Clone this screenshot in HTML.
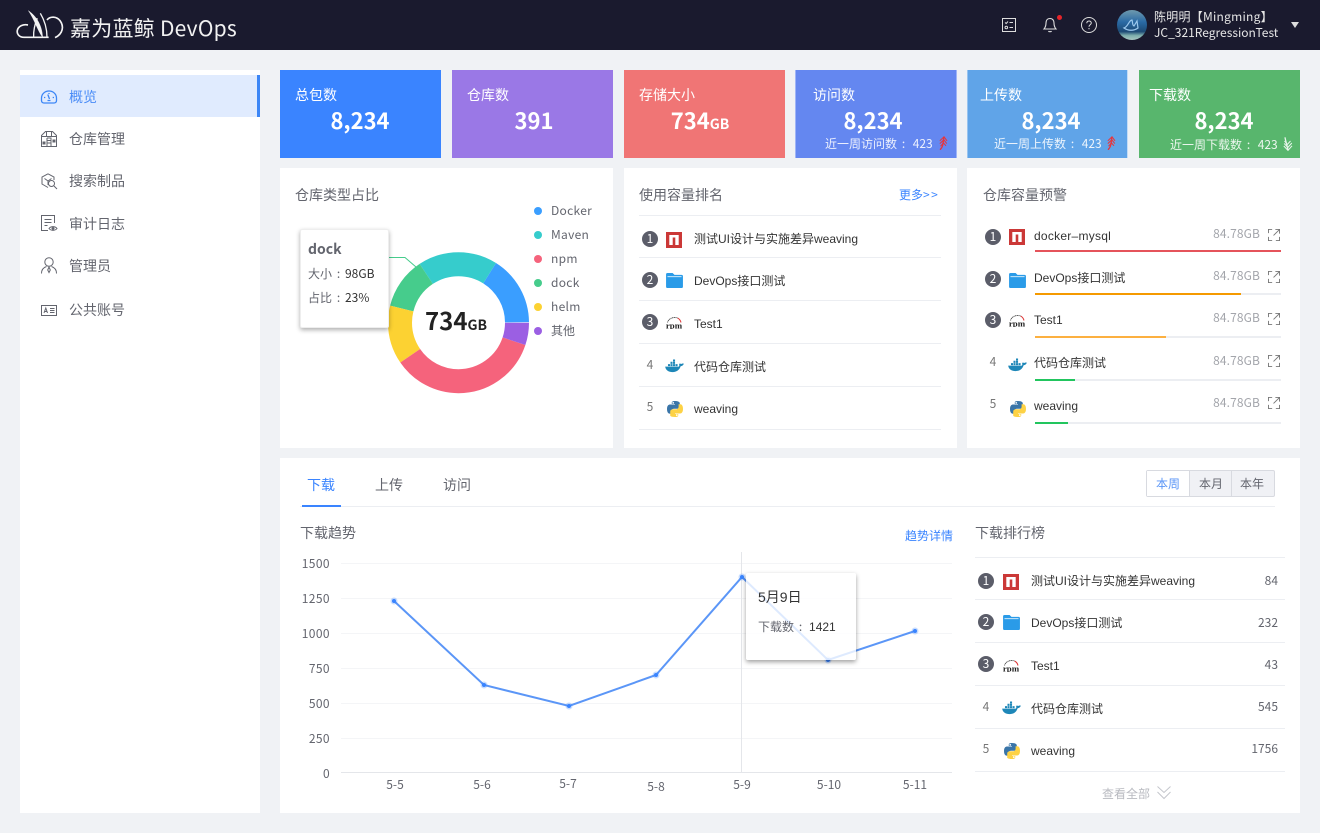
<!DOCTYPE html>
<html lang="zh"><head><meta charset="utf-8"><title>嘉为蓝鲸 DevOps</title>
<style>
*{box-sizing:border-box}
html,body{margin:0;padding:0}
body{width:1320px;height:833px;position:relative;overflow:hidden;background:#f0f2f5;font-family:"Noto Sans CJK SC","Liberation Sans",sans-serif;color:#63656e}
.a,.t{position:absolute}
.t{white-space:nowrap;line-height:20px;height:20px}
.w{background:#fff;position:absolute}
.l{font-family:"Liberation Sans","Noto Sans CJK SC",sans-serif;font-size:12px;color:#333}
.nav{font-size:14px;color:#63656e;left:69px}
.card{position:absolute;top:70px;height:88px;color:#fff}
.ct{font-size:14px;color:#fff;top:85px}
.cn{font-size:22px;font-weight:700;color:#fff;top:110px;text-align:center;width:120px}
.cn small{font-size:14px;font-weight:700}
.cs{font-size:12px;color:rgba(255,255,255,.88);top:134px}
.c{display:inline-block;width:13px;text-align:center}
.h{font-size:14px;color:#63656e}
.n{width:16px;height:16px;border-radius:50%;background:#5b5d69;color:#fff;font-size:12px;line-height:16px;text-align:center;position:absolute}
.p{font-size:12px;color:#777;position:absolute;line-height:20px;width:16px;text-align:center}
.hr{position:absolute;height:1px;background:#eceef2}
.sz{font-size:12px;color:#a3a5ab;text-align:right;width:70px;left:1190px;letter-spacing:.1px}
.bar{position:absolute;left:1035px;width:246px;height:2px;background:#eceef2}
.bar i{display:block;height:2px}
.v{font-size:12px;color:#63656e;text-align:right;width:60px;left:1218px}
.y{font-size:12px;color:#63656e;text-align:right;width:32px;left:298px;letter-spacing:.4px}
.x{font-size:12px;color:#63656e;text-align:center;width:40px}
.a svg,svg.a{display:block;overflow:visible}
</style></head><body>
<svg width="0" height="0" style="position:absolute">
<defs>
<symbol id="npm" viewBox="0 0 16 16"><rect width="16" height="16" fill="#cb3837"/><path d="M3.300 3h9.400v10H9.300V5.500H6.700V13H3.300z" fill="#fff"/></symbol>
<symbol id="folder" viewBox="0 0 18 16"><path d="M1.500 0h5.500l2 2h7.500A1.500 1.500 0 0 1 18 3.500v11a1.500 1.500 0 0 1-1.500 1.500h-15A1.500 1.500 0 0 1 0 14.500v-13A1.500 1.500 0 0 1 1.500 0z" fill="#2a9be8"/><rect x="1.500" y="3.400" width="15" height="1" fill="#d8eefb"/></symbol>
<symbol id="rpm" viewBox="0 0 18 14"><path d="M2 7A8 7 0 0 1 13 2.200" fill="none" stroke="#555" stroke-width="1" stroke-dasharray="1.300 .5"/><path d="M13 2.200A8 7 0 0 1 16.500 7" fill="none" stroke="#d33" stroke-width="1.100"/><text x="9" y="13.500" text-anchor="middle" font-family="Liberation Serif" font-size="9.500" font-weight="700" fill="#222" textLength="17.500" lengthAdjust="spacingAndGlyphs">rpm</text></symbol>
<symbol id="docker" viewBox="0 0 20 15"><path d="M0 8.200h14.700c.6-.9.600-2 .1-3 1-.5 1.800-.3 2.500.1.600-.4 1.600-.6 2.700-.2-.6 1.500-1.800 2.500-3.400 2.700C15.300 11.700 12.500 14 8 14 3.700 14 .7 12.300 0 8.200z" fill="#1e87b8"/><path d="M3 5.500h2.200v2.200H3zM5.700 5.500h2.200v2.200H5.700zM8.400 5.500h2.200v2.200H8.400zM11.100 5.500h2.200v2.200h-2.200zM5.700 3h2.200v2.200H5.700zM8.400 3h2.200v2.200H8.400zM8.400.5h2.200v2.200H8.400z" fill="#1e87b8"/></symbol>
<symbol id="py" viewBox="0 0 16 16"><path d="M7.900 0C4.700 0 4.800 1.400 4.800 1.400V3h3.200v.5H3.200S0 3.100 0 8s2.700 4.700 2.700 4.700h1.700v-2.300s-.1-2.700 2.700-2.700h3.100s2.600 0 2.600-2.500V2.600S13.300 0 7.900 0zM6.200 1a.9.9 0 1 1 0 1.800.9.900 0 0 1 0-1.800z" fill="#3a75a8"/><path d="M8.100 16c3.200 0 3.100-1.400 3.100-1.400V13H8v-.5h4.800S16 12.900 16 8s-2.700-4.700-2.700-4.700h-1.700v2.300s.1 2.700-2.700 2.700H5.800s-2.600 0-2.600 2.500v3.600S2.700 16 8.100 16zm1.700-1a.9.9 0 1 1 0-1.800.9.900 0 0 1 0 1.800z" fill="#fdd245"/></symbol>
<symbol id="ext" viewBox="0 0 13 13"><path d="M4.500.5H.5v4M.5 8.500v4h4M8.500 12.500h4v-4M8 .5h4.500V5M12 1 6 7" fill="none" stroke="#777" stroke-width="1"/></symbol>
<symbol id="up" viewBox="0 0 10 14"><path d="M2 13.800C5.200 11 5 7 5.800 1.500" fill="none" stroke="#e8343a" stroke-width="1.300"/><path d="M1.800 4.800 6 .8 9 4.800M1.800 7.600 5.800 3.800 8.800 7.600M2.500 10.200 5.500 7 8 9.800" fill="none" stroke="#e8343a" stroke-width="1"/></symbol>
<symbol id="down" viewBox="0 0 10 14"><path d="M2 .3C2.600 4 4 8 5 13" fill="none" stroke="#e9f6ec" stroke-width="1.300"/><path d="M.8 9 5 13.400 9 8.800M1.200 6.500 4.800 10.500 8.800 6M1.500 4 4.300 7.500 7.500 4" fill="none" stroke="#e9f6ec" stroke-width="1"/></symbol>
</defs></svg>

<!-- header -->
<div class="a" style="left:0;top:0;width:1320px;height:50px;background:#1a1a2e"></div>
<svg class="a" style="left:0;top:0" width="70" height="45" viewBox="0 0 210 135" fill="none" stroke="#f4f4f4" stroke-width="5">
<path d="M146 112H72C56 112 50 100 52 91 55 78 70 72 84 75"/>
<path d="M85 32C106 46 126 72 128 112 114 95 104 60 85 32z" fill="#f4f4f4" stroke-width="1"/>
<path d="M101 110C100 95 104 72 112 55" stroke-width="4"/>
<path d="M121 40C133 60 141 86 141 112" stroke-width="4"/>
<path d="M141 60C151 47 171 50 180 62 192 78 190 101 165 113"/>
</svg>
<div class="t" style="left:70px;top:18px;font-size:21px;letter-spacing:.25px;color:#f2f2f2">嘉为蓝鲸 DevOps</div>
<svg class="a" style="left:1002px;top:18px" width="14" height="14" viewBox="0 0 14 14" fill="none" stroke="#ddd" stroke-width="1"><rect x=".5" y=".5" width="13" height="13"/><path d="M3 4.500l1.200 1L6 3.500M7.500 4.500H11M7.500 9.500H11"/><circle cx="4.300" cy="9.500" r="1.300"/></svg>
<svg class="a" style="left:1043px;top:17px" width="14" height="16" viewBox="0 0 14 16" fill="none" stroke="#ddd" stroke-width="1.100"><path d="M7 1.500c-2.800 0-4 2.200-4 4.500 0 3-1 4.800-2 6h12c-1-1.200-2-3-2-6 0-2.300-1.200-4.500-4-4.500z"/><path d="M5.500 14c.4 1 2.600 1 3 0"/></svg>
<div class="a" style="left:1057px;top:15px;width:5px;height:5px;border-radius:50%;background:#e5252a"></div>
<svg class="a" style="left:1081px;top:17px" width="16" height="16" viewBox="0 0 16 16" fill="none" stroke="#ddd" stroke-width="1"><circle cx="8" cy="8" r="7.500"/><path d="M5.800 6.300c0-3 4.500-3 4.500-.3 0 1.800-2.300 1.800-2.300 3.700"/><path d="M8 11v1.200"/></svg>
<svg class="a" style="left:1117px;top:10px" width="30" height="30" viewBox="0 0 30 30"><defs><linearGradient id="av" x1="0" y1="0" x2="0" y2="1"><stop offset="0" stop-color="#6f9aae"/><stop offset=".4" stop-color="#2a6aa5"/><stop offset=".72" stop-color="#1d4a75"/><stop offset=".85" stop-color="#7fb0ad"/><stop offset="1" stop-color="#a8c6c2"/></linearGradient></defs><circle cx="15" cy="15" r="15" fill="url(#av)"/><path d="M7 18c4-1 5-8 8-8 1 3 0 5 2 6l3-5 1 7c-4 3-10 3-14 0z" fill="none" stroke="#9cc9ee" stroke-width="1.200"/></svg>
<div class="t" style="left:1154px;top:7px;font-size:12px;letter-spacing:.25px;color:#e6e6e6">陈明明【Mingming】</div>
<div class="t" style="left:1154px;top:23px;font-size:12px;color:#e6e6e6">JC_321RegressionTest</div>
<div class="a" style="left:1291px;top:22px;border-left:4px solid transparent;border-right:4px solid transparent;border-top:6px solid #ddd"></div>

<!-- sidebar -->
<div class="w" style="left:20px;top:70px;width:240px;height:743px"></div>
<div class="a" style="left:20px;top:75px;width:240px;height:42px;background:#e0ebfe;border-right:3px solid #3c86f6"></div>
<svg class="a" style="left:41px;top:90px" width="16" height="14" viewBox="0 0 16 14" fill="none" stroke="#3c86f6" stroke-width="1.300"><path d="M3 13h10c1.500 0 2.500-1 2.500-2.500V8A7.500 7 0 0 0 .5 8v2.500C.5 12 1.500 13 3 13z"/><path d="M8.500 9 6.800 4.500M3 7.500h1.300M11.700 7.500H13M8 3v1M6.500 10.500h3"/></svg>
<div class="t nav" style="top:87px;color:#4a8cf7">概览</div>
<svg class="a" style="left:41px;top:131px" width="16" height="16" viewBox="0 0 16 16" fill="none" stroke="#63656e" stroke-width="1"><path d="M.5 15.500V4.500L4.500.5h7l4 4v11z"/><path d="M.5 5.500h15M5.500 1v4.500M10.500 1v4.500"/><path d="M6 7h4v8M6 7v8M6 9.500h4M6 12h4" /><rect x="2" y="11" width="2" height="2" fill="#63656e"/><rect x="12" y="9" width="2" height="2" fill="#63656e"/></svg>
<div class="t nav" style="top:129px">仓库管理</div>
<svg class="a" style="left:41px;top:173px" width="17" height="17" viewBox="0 0 17 17" fill="none" stroke="#63656e" stroke-width="1"><path d="M7 .8 13 4v3M7 .8 1 4v7l6 3.500"/><path d="M3.500 5.500 7 8v4M10.500 5.500 7 8"/><circle cx="10.500" cy="10.500" r="3"/><path d="M13 13l3 3"/></svg>
<div class="t nav" style="top:171px">搜索制品</div>
<svg class="a" style="left:41px;top:215px" width="17" height="17" viewBox="0 0 17 17" fill="none" stroke="#63656e" stroke-width="1"><path d="M7 15.500H.5V.5h13V8"/><path d="M3.500 4.500h7M3.500 7.500h7M3.500 10.500h3"/><path d="M8 13.500c2-2.500 6-2.500 8 0-2 2.500-6 2.500-8 0z"/><circle cx="12" cy="13.500" r="1" fill="#63656e"/></svg>
<div class="t nav" style="top:214px">审计日志</div>
<svg class="a" style="left:41px;top:257px" width="16" height="17" viewBox="0 0 16 17" fill="none" stroke="#63656e" stroke-width="1"><circle cx="8" cy="5" r="4.200"/><path d="M.5 16.500c0-4 2-6 5-7M15.500 16.500c0-4-2-6-5-7M8 10l-1.300 3L8 15.500 9.300 13z"/></svg>
<div class="t nav" style="top:256px">管理员</div>
<svg class="a" style="left:41px;top:305px" width="16" height="11" viewBox="0 0 16 11" fill="none" stroke="#63656e" stroke-width="1"><rect x=".5" y=".5" width="15" height="10"/><path d="M3 8l1.800-5L6.500 8M3.700 6.500h2.300M9 3.500h4.500M9 5.500h4.500M9 7.500h4.500"/></svg>
<div class="t nav" style="top:300px">公共账号</div>

<!-- stat cards -->
<div class="card" style="left:280px;width:161px;background:#3a84ff"></div>
<div class="card" style="left:452px;width:161px;background:#9a78e6"></div>
<div class="card" style="left:624px;width:161px;background:#f07575"></div>
<div class="card" style="left:795px;width:162px;background:#6487f0;border-left:1px solid #9fb5f7;border-right:1px solid #9fb5f7"></div>
<div class="card" style="left:967px;width:161px;background:#60a4e8;border-left:1px solid #98c4f0;border-right:1px solid #c4dcf6"></div>
<div class="card" style="left:1139px;width:161px;background:#58b66d"></div>
<div class="t ct" style="left:295px">总包数</div><div class="t cn" style="left:300px">8,234</div>
<div class="t ct" style="left:467px">仓库数</div><div class="t cn" style="left:474px">391</div>
<div class="t ct" style="left:639px">存储大小</div><div class="t cn" style="left:640px">734<small>GB</small></div>
<div class="t ct" style="left:813px">访问数</div><div class="t cn" style="left:813px">8,234</div>
<div class="t cs" style="left:825px">近一周访问数<span class="c">:</span>&nbsp;423</div><svg class="a" style="left:938px;top:136px" width="10" height="14"><use href="#up"/></svg>
<div class="t ct" style="left:980px">上传数</div><div class="t cn" style="left:991px">8,234</div>
<div class="t cs" style="left:994px">近一周上传数<span class="c">:</span>&nbsp;423</div><svg class="a" style="left:1106px;top:136px" width="10" height="14"><use href="#up"/></svg>
<div class="t ct" style="left:1149px">下载数</div><div class="t cn" style="left:1164px">8,234</div>
<div class="t cs" style="left:1170px;top:135px">近一周下载数<span class="c">:</span>&nbsp;423</div><svg class="a" style="left:1283px;top:137px" width="10" height="14"><use href="#down"/></svg>

<!-- panels -->
<div class="w" style="left:280px;top:168px;width:333px;height:280px"></div>
<div class="w" style="left:624px;top:168px;width:333px;height:280px"></div>
<div class="w" style="left:967px;top:168px;width:333px;height:280px"></div>
<div class="w" style="left:280px;top:458px;width:1020px;height:355px"></div>

<!-- donut panel -->
<div class="t h" style="left:295px;top:185px">仓库类型占比</div>
<svg class="a" style="left:280px;top:168px" width="333" height="280">
<g transform="translate(178.500,154.700)" fill="none" stroke-width="24">
<circle r="58.500" pathLength="360" stroke="#3a9eff" stroke-dasharray="57.500 360" stroke-dashoffset="-302.500"/>
<circle r="58.500" pathLength="360" stroke="#36cccc" stroke-dasharray="65.700 360" stroke-dashoffset="-236.800"/>
<circle r="58.500" pathLength="360" stroke="#46cc8c" stroke-dasharray="42.500 360" stroke-dashoffset="-194.300"/>
<circle r="58.500" pathLength="360" stroke="#fcd232" stroke-dasharray="48.500 360" stroke-dashoffset="-145.800"/>
<circle r="58.500" pathLength="360" stroke="#f5637c" stroke-dasharray="127.300 360" stroke-dashoffset="-18.500"/>
<circle r="58.500" pathLength="360" stroke="#9b5fe3" stroke-dasharray="18.500 360" stroke-dashoffset="0"/>
</g>
<path d="M109 89.500h16l11 9.500" fill="none" stroke="#46cc8c" stroke-width="1"/>
</svg>
<div class="t" style="left:425px;top:308px;font-size:24px;font-weight:700;color:#222;line-height:24px;height:24px">734<span style="font-size:14px">GB</span></div>
<div class="a" style="left:300px;top:229px;width:89px;height:99px;background:#fff;border:1px solid #eee;box-shadow:0 2px 5px rgba(0,0,0,.32);border-radius:2px"></div>
<div class="t" style="left:308px;top:239px;font-size:14px;font-weight:700;color:#63656e">dock</div>
<div class="t" style="left:308px;top:264px;font-size:12px;color:#63656e">大小<span class="c">:</span><span style="color:#333">98GB</span></div>
<div class="t" style="left:308px;top:288px;font-size:12px;color:#63656e">占比<span class="c">:</span><span style="color:#333">23%</span></div>
<div class="a" style="left:534px;top:207px;width:8px;height:8px;border-radius:50%;background:#3a9eff"></div><div class="t" style="left:551px;top:201px;font-size:12px;letter-spacing:.3px">Docker</div>
<div class="a" style="left:534px;top:231px;width:8px;height:8px;border-radius:50%;background:#36cccc"></div><div class="t" style="left:551px;top:225px;font-size:12px;letter-spacing:.3px">Maven</div>
<div class="a" style="left:534px;top:255px;width:8px;height:8px;border-radius:50%;background:#f5637c"></div><div class="t" style="left:551px;top:249px;font-size:12px;letter-spacing:.3px">npm</div>
<div class="a" style="left:534px;top:279px;width:8px;height:8px;border-radius:50%;background:#46cc8c"></div><div class="t" style="left:551px;top:273px;font-size:12px;letter-spacing:.3px">dock</div>
<div class="a" style="left:534px;top:303px;width:8px;height:8px;border-radius:50%;background:#fcd232"></div><div class="t" style="left:551px;top:297px;font-size:12px;letter-spacing:.3px">helm</div>
<div class="a" style="left:534px;top:327px;width:8px;height:8px;border-radius:50%;background:#9b5fe3"></div><div class="t" style="left:551px;top:321px;font-size:12px">其他</div>

<!-- capacity rank -->
<div class="t h" style="left:639px;top:185px">使用容量排名</div>
<div class="t" style="left:899px;top:185px;font-size:12px;color:#3a84ff">更多<span style="letter-spacing:1.500px">&gt;&gt;</span></div>
<div class="hr" style="left:639px;top:215px;width:302px"></div>
<div class="hr" style="left:639px;top:257px;width:302px"></div>
<div class="hr" style="left:639px;top:300px;width:302px"></div>
<div class="hr" style="left:639px;top:343px;width:302px"></div>
<div class="hr" style="left:639px;top:386px;width:302px"></div>
<div class="hr" style="left:639px;top:429px;width:302px"></div>
<div class="n" style="left:642px;top:231px">1</div><svg class="a" style="left:666px;top:232px" width="16" height="16"><use href="#npm"/></svg><div class="t l" style="left:694px;top:229px">测试UI设计与实施差异weaving</div>
<div class="n" style="left:642px;top:272px">2</div><svg class="a" style="left:666px;top:273px" width="17" height="15"><use href="#folder"/></svg><div class="t l" style="left:694px;top:271px">DevOps接口测试</div>
<div class="n" style="left:642px;top:314px">3</div><svg class="a" style="left:665px;top:316px" width="18" height="13"><use href="#rpm"/></svg><div class="t l" style="left:694px;top:314px">Test1</div>
<div class="p" style="left:642px;top:355px">4</div><svg class="a" style="left:665px;top:359px" width="19" height="14"><use href="#docker"/></svg><div class="t l" style="left:694px;top:357px">代码仓库测试</div>
<div class="p" style="left:642px;top:397px">5</div><svg class="a" style="left:667px;top:401px" width="16" height="16"><use href="#py"/></svg><div class="t l" style="left:694px;top:399px">weaving</div>

<!-- capacity warning -->
<div class="t h" style="left:983px;top:185px">仓库容量预警</div>
<div class="n" style="left:985px;top:229px">1</div><svg class="a" style="left:1009px;top:229px" width="16" height="16"><use href="#npm"/></svg><div class="t l" style="left:1034px;top:226px;letter-spacing:.25px">docker–mysql</div><div class="t sz" style="top:224px">84.78GB</div><svg class="a" style="left:1268px;top:229px" width="12" height="12"><use href="#ext"/></svg><div class="bar" style="top:250px"><i style="width:246px;background:#e5535b"></i></div>
<div class="n" style="left:985px;top:271px">2</div><svg class="a" style="left:1009px;top:273px" width="17" height="15"><use href="#folder"/></svg><div class="t l" style="left:1034px;top:268px">DevOps接口测试</div><div class="t sz" style="top:266px">84.78GB</div><svg class="a" style="left:1268px;top:271px" width="12" height="12"><use href="#ext"/></svg><div class="bar" style="top:293px"><i style="width:206px;background:#f59a00"></i></div>
<div class="n" style="left:985px;top:312px">3</div><svg class="a" style="left:1008px;top:314px" width="18" height="13"><use href="#rpm"/></svg><div class="t l" style="left:1034px;top:310px">Test1</div><div class="t sz" style="top:308px">84.78GB</div><svg class="a" style="left:1268px;top:313px" width="12" height="12"><use href="#ext"/></svg><div class="bar" style="top:336px"><i style="width:131px;background:#fcb040"></i></div>
<div class="p" style="left:985px;top:352px">4</div><svg class="a" style="left:1008px;top:358px" width="19" height="14"><use href="#docker"/></svg><div class="t l" style="left:1034px;top:353px">代码仓库测试</div><div class="t sz" style="top:351px">84.78GB</div><svg class="a" style="left:1268px;top:355px" width="12" height="12"><use href="#ext"/></svg><div class="bar" style="top:379px"><i style="width:40px;background:#22c55e"></i></div>
<div class="p" style="left:985px;top:394px">5</div><svg class="a" style="left:1010px;top:401px" width="16" height="16"><use href="#py"/></svg><div class="t l" style="left:1034px;top:396px">weaving</div><div class="t sz" style="top:393px">84.78GB</div><svg class="a" style="left:1268px;top:397px" width="12" height="12"><use href="#ext"/></svg><div class="bar" style="top:422px"><i style="width:33px;background:#22c55e"></i></div>

<!-- tabs -->
<div class="t" style="left:307px;top:475px;font-size:14px;color:#3a84ff">下载</div>
<div class="t" style="left:375px;top:475px;font-size:14px">上传</div>
<div class="t" style="left:443px;top:475px;font-size:14px">访问</div>
<div class="hr" style="left:300px;top:506px;width:975px"></div>
<div class="a" style="left:302px;top:505px;width:39px;height:2px;background:#3a84ff"></div>
<div class="a" style="left:1146px;top:470px;width:129px;height:27px;background:#f0f1f5;border:1px solid #d8dae0;border-radius:2px"></div>
<div class="a" style="left:1147px;top:471px;width:42px;height:25px;background:#fff"></div>
<div class="a" style="left:1189px;top:471px;width:1px;height:25px;background:#d8dae0"></div>
<div class="a" style="left:1231px;top:471px;width:1px;height:25px;background:#d8dae0"></div>
<div class="t" style="left:1156px;top:474px;font-size:12px;color:#5b96f7">本周</div>
<div class="t" style="left:1199px;top:474px;font-size:12px">本月</div>
<div class="t" style="left:1240px;top:474px;font-size:12px">本年</div>

<!-- chart -->
<div class="t h" style="left:300px;top:523px">下载趋势</div>
<div class="t" style="left:905px;top:526px;font-size:12px;color:#3a84ff">趋势详情</div>
<div class="t y" style="top:554px">1500</div>
<div class="t y" style="top:589px">1250</div>
<div class="t y" style="top:624px">1000</div>
<div class="t y" style="top:659px">750</div>
<div class="t y" style="top:694px">500</div>
<div class="t y" style="top:729px">250</div>
<div class="t y" style="top:764px">0</div>
<div class="t x" style="left:375px;top:775px">5-5</div>
<div class="t x" style="left:462px;top:775px">5-6</div>
<div class="t x" style="left:548px;top:774px">5-7</div>
<div class="t x" style="left:636px;top:777px">5-8</div>
<div class="t x" style="left:722px;top:775px">5-9</div>
<div class="t x" style="left:809px;top:775px">5-10</div>
<div class="t x" style="left:895px;top:775px">5-11</div>
<svg class="a" style="left:0;top:0" width="1320" height="833">
<g stroke="#f4f5f7" stroke-width="1"><path d="M341 563.500H952M341 598.500H952M341 633.500H952M341 668.500H952M341 703.500H952M341 738.500H952"/></g>
<path d="M341 772.500H952" stroke="#e4e6ea"/>
<path d="M741.500 552V772" stroke="#e4e6ea"/>
<polyline points="394,601 484,685 569,706 656,675 742,577 828,660 915,631" fill="none" stroke="#5b96f7" stroke-width="2"/>
<g fill="#3a84ff"><circle cx="394" cy="601" r="2"/><circle cx="484" cy="685" r="2"/><circle cx="569" cy="706" r="2"/><circle cx="656" cy="675" r="2"/><circle cx="742" cy="577" r="2"/><circle cx="828" cy="660" r="2"/><circle cx="915" cy="631" r="2"/></g>
<g fill="#3a84ff" opacity=".28"><circle cx="394" cy="601" r="3.500"/><circle cx="484" cy="685" r="3.500"/><circle cx="569" cy="706" r="3.500"/><circle cx="656" cy="675" r="3.500"/><circle cx="742" cy="577" r="3.500"/><circle cx="828" cy="660" r="3.500"/><circle cx="915" cy="631" r="3.500"/></g>
</svg>
<div class="a" style="left:746px;top:573px;width:110px;height:87px;background:rgba(255,255,255,.8);box-shadow:0 2px 5px rgba(0,0,0,.38);border-radius:2px"></div>
<div class="t" style="left:758px;top:587px;font-size:14px;color:#333;font-family:'Liberation Sans','Noto Sans CJK SC',sans-serif">5月9日</div>
<div class="t" style="left:758px;top:617px;font-size:12px;color:#63656e">下载数<span class="c">:</span><span style="color:#333;font-family:'Liberation Sans',sans-serif;margin-left:2px">1421</span></div>

<!-- download ranking -->
<div class="t h" style="left:975px;top:523px">下载排行榜</div>
<div class="hr" style="left:975px;top:557px;width:310px"></div>
<div class="hr" style="left:975px;top:599px;width:310px"></div>
<div class="hr" style="left:975px;top:642px;width:310px"></div>
<div class="hr" style="left:975px;top:685px;width:310px"></div>
<div class="hr" style="left:975px;top:728px;width:310px"></div>
<div class="hr" style="left:975px;top:771px;width:310px"></div>
<div class="n" style="left:978px;top:573px">1</div><svg class="a" style="left:1003px;top:574px" width="16" height="16"><use href="#npm"/></svg><div class="t l" style="left:1031px;top:571px">测试UI设计与实施差异weaving</div><div class="t v" style="top:571px">84</div>
<div class="n" style="left:978px;top:614px">2</div><svg class="a" style="left:1003px;top:615px" width="17" height="15"><use href="#folder"/></svg><div class="t l" style="left:1031px;top:613px">DevOps接口测试</div><div class="t v" style="top:613px">232</div>
<div class="n" style="left:978px;top:656px">3</div><svg class="a" style="left:1002px;top:659px" width="18" height="13"><use href="#rpm"/></svg><div class="t l" style="left:1031px;top:656px">Test1</div><div class="t v" style="top:655px">43</div>
<div class="p" style="left:978px;top:697px">4</div><svg class="a" style="left:1002px;top:701px" width="19" height="14"><use href="#docker"/></svg><div class="t l" style="left:1031px;top:699px">代码仓库测试</div><div class="t v" style="top:697px">545</div>
<div class="p" style="left:978px;top:739px">5</div><svg class="a" style="left:1004px;top:743px" width="16" height="16"><use href="#py"/></svg><div class="t l" style="left:1031px;top:741px">weaving</div><div class="t v" style="top:739px">1756</div>
<div class="t" style="left:1102px;top:784px;font-size:12px;color:#b8bac0">查看全部</div>
<svg class="a" style="left:1157px;top:786px" width="14" height="14" viewBox="0 0 14 14" fill="none" stroke="#c4c6cc" stroke-width="1"><path d="M.5 .5 7 6.500 13.500 .5M.5 6 7 12.500 13.500 6"/></svg>
</body></html>
